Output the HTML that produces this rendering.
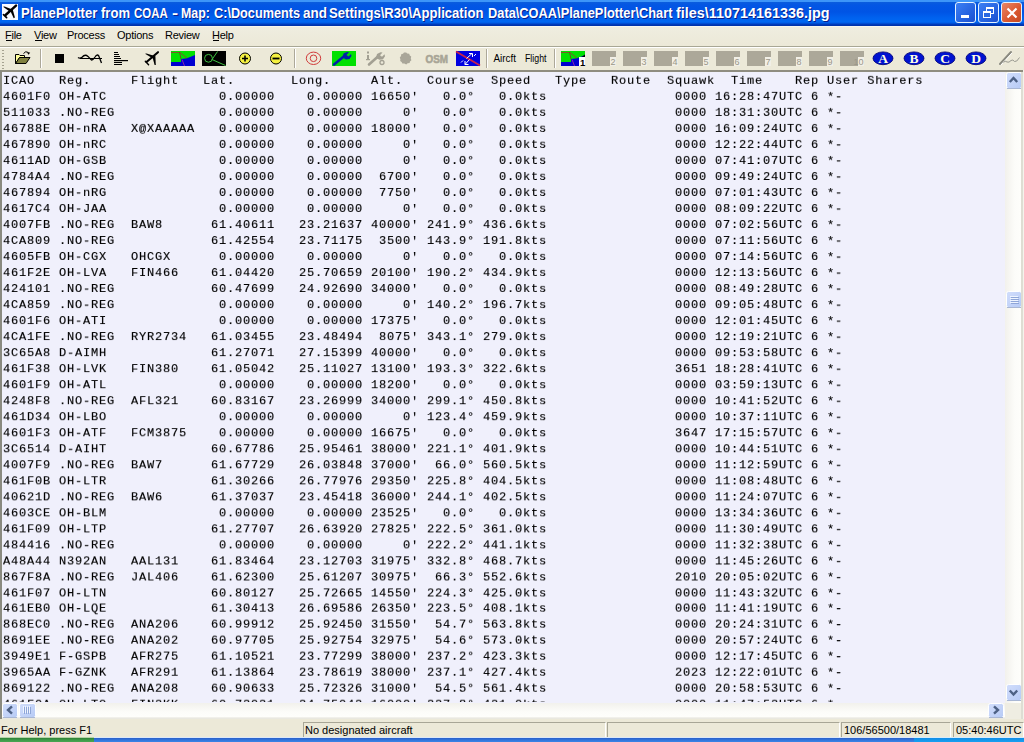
<!DOCTYPE html>
<html><head><meta charset="utf-8">
<style>
*{margin:0;padding:0;box-sizing:border-box}
html,body{width:1024px;height:742px;overflow:hidden;background:#ECE9D8;font-family:"Liberation Sans",sans-serif}
.abs{position:absolute}
#title{left:0;top:0;width:1024px;height:26px;
 background:linear-gradient(to bottom,#3D95F9 0px,#3D95F9 2px,#0B5DDD 2px,#0356E4 5px,#0054E5 12px,#0062EF 18px,#0067F2 22px,#0058E0 23px,#0042C6 24px,#0033AC 25px,#0033AC 26px)}
#ttext{left:0;top:5px;font:bold 14px "Liberation Sans",sans-serif;color:#fff;white-space:pre;text-shadow:1px 1px 0 #0A1E8C}
.tw{position:absolute;top:0;transform-origin:0 0}
.wbtn{top:2px;width:21px;height:21px;border:1px solid #E4F2FF;border-radius:3px}
#menu{left:0;top:26px;width:1024px;height:20px;background:linear-gradient(#F7F6EF 0,#F7F6EF 1px,#EFEDE0 1px,#ECE9D8 19px)}
.mi{top:29px;font-size:11px;letter-spacing:-0.25px;color:#000;white-space:pre}
#tb{left:0;top:46px;width:1024px;height:26px;background:#ECE9D8;border-top:1px solid #A8A795;box-shadow:inset 0 1px 0 #fff}
#list{left:0;top:70px;width:1024px;height:650px;background:#F0F0FC;border-top:2px solid #8F8D80;border-left:2px solid #8A8A80}
#ltext{left:1px;top:2px;font:12px "Liberation Mono",monospace;letter-spacing:0.8px;line-height:17.9775px;transform:scaleY(0.89);will-change:transform;-webkit-text-stroke:0.15px #000;transform-origin:0 0;white-space:pre;color:#000}
#vsb{left:1005px;top:72px;width:16px;height:631px;background:linear-gradient(to right,#F2F1EC,#FCFCF9 60%,#FEFEFB)}
#hsb{left:2px;top:703px;width:1003px;height:16px;background:linear-gradient(to bottom,#F2F1EC,#FCFCF9 55%,#FEFEFB 85%,#E9E8E0 94%)}
#grip{left:1005px;top:703px;width:16px;height:16px;background:#EFEDE2}
.sbb{width:15px;height:15px;border:1px solid #fff;border-radius:2px;background:linear-gradient(135deg,#C8D8FC,#B4C8F6)}
#status{left:0;top:719px;width:1024px;height:18px;background:#ECE9D8}
.st{font-size:11px;color:#000;white-space:pre}
.pane{top:722px;height:15px;border-left:1px solid #A8A696;border-top:1px solid #A8A696;border-right:1px solid #fff}
#task{left:0;top:737px;width:1024px;height:5px}
</style></head><body>
<div id="title" class="abs"></div>
<div class="abs" style="left:2px;top:4px;width:16px;height:16px;background:#F8FAFF">
<svg width="16" height="16" viewBox="0 0 16 16"><path d="M3.6 11L14 1.6" stroke="#000" stroke-width="2.4" stroke-linecap="round"/><path d="M1 2.8L2.6 2.6 10.4 5.4 8 7.8z" fill="#000"/><path d="M8.2 6.4L10.6 5 12.9 13.6 11.7 14.2z" fill="#000"/><path d="M1.5 10.6L4.6 13.6" stroke="#000" stroke-width="1.7" stroke-linecap="round"/></svg>
</div>
<div id="ttext" class="abs"><span class="tw" style="left:21.1px;transform:scaleX(0.9339)">PlanePlotter</span><span class="tw" style="left:101.2px;transform:scaleX(0.9317)">from</span><span class="tw" style="left:134.0px;transform:scaleX(0.8173)">COAA</span><span class="tw" style="left:171.7px;transform:scaleX(1.3057)">-</span><span class="tw" style="left:180.9px;transform:scaleX(0.8846)">Map:</span><span class="tw" style="left:213.7px;transform:scaleX(0.9062)">C:\Documents</span><span class="tw" style="left:302.8px;transform:scaleX(0.9642)">and</span><span class="tw" style="left:329.4px;transform:scaleX(0.9362)">Settings\R30\Application</span><span class="tw" style="left:487.9px;transform:scaleX(0.9155)">Data\COAA\PlanePlotter\Chart</span><span class="tw" style="left:676.2px;transform:scaleX(1.0277)">files\110714161336.jpg</span></div>
<div class="abs wbtn" style="left:955px;background:linear-gradient(135deg,#3C80F4,#2663E0 60%,#1B4FCF)"><div class="abs" style="left:5px;top:12px;width:8px;height:3px;background:#fff"></div></div>
<div class="abs wbtn" style="left:978px;background:linear-gradient(135deg,#3C80F4,#2663E0 60%,#1B4FCF)">
 <div class="abs" style="left:7px;top:4px;width:8px;height:7px;border:1px solid #fff;border-top-width:2px"></div>
 <div class="abs" style="left:4px;top:8px;width:8px;height:7px;border:1px solid #fff;border-top-width:2px;background:#2A68E2"></div>
</div>
<div class="abs wbtn" style="left:1001px;background:linear-gradient(135deg,#E98767,#D9572E 60%,#C44A22)">
<svg class="abs" style="left:4px;top:4px" width="12" height="12" viewBox="0 0 12 12"><path d="M1.5 1.5L10.5 10.5M10.5 1.5L1.5 10.5" stroke="#fff" stroke-width="2.2"/></svg>
</div>

<div id="menu" class="abs"></div>
<div class="abs mi" style="left:5px">File</div>
<div class="abs mi" style="left:34px">View</div>
<div class="abs mi" style="left:67px">Process</div>
<div class="abs mi" style="left:117px">Options</div>
<div class="abs mi" style="left:165px">Review</div>
<div class="abs mi" style="left:212px">Help</div>
<div class="abs" style="left:6px;top:40px;width:6px;height:1px;background:#000"></div>
<div class="abs" style="left:35px;top:40px;width:7px;height:1px;background:#000"></div>
<div class="abs" style="left:213px;top:40px;width:6px;height:1px;background:#000"></div>

<div id="tb" class="abs"></div>
<svg class="abs" style="left:0;top:46px" width="1024" height="26" viewBox="0 46 1024 26">
<g fill="#A5A290">
<rect x="2" y="50" width="2" height="1"/><rect x="2" y="53" width="2" height="1"/><rect x="2" y="56" width="2" height="1"/><rect x="2" y="59" width="2" height="1"/><rect x="2" y="62" width="2" height="1"/><rect x="2" y="65" width="2" height="1"/><rect x="2" y="68" width="2" height="1"/>
</g>
<!-- separators -->
<g fill="#ACA899"><rect x="40" y="49" width="1" height="19"/><rect x="294" y="49" width="1" height="19"/><rect x="486" y="49" width="1" height="19"/><rect x="554" y="49" width="1" height="19"/></g>
<g fill="#FFFFFF"><rect x="41" y="49" width="1" height="19"/><rect x="295" y="49" width="1" height="19"/><rect x="487" y="49" width="1" height="19"/><rect x="555" y="49" width="1" height="19"/></g>
<!-- open folder -->
<path d="M15.5 54.5H19L20 55.5H24.5V57.5H19.5L16 63.5H15.5Z" fill="#FFFF9C" stroke="#000" stroke-width="1"/>
<path d="M15.5 63.5L19.5 57.5H30L26 63.5Z" fill="#808040" stroke="#000" stroke-width="1"/>
<path d="M23.5 53.5Q25.5 50.5 28.5 52.5" fill="none" stroke="#000" stroke-width="1"/><path d="M27 52.5h3.2l-1.6 2.3z" fill="#000"/>
<!-- black square -->
<rect x="55" y="54" width="9" height="9" fill="#000"/>
<!-- wave -->
<path d="M78 57.5Q80 59 82 57.2Q85 53.8 88 56.4Q90 58.6 91.5 60Q93 60.2 95 57Q97 53.6 98.8 56L101.5 63" fill="none" stroke="#000" stroke-width="1.3"/>
<path d="M80 58.5H102" stroke="#000" stroke-width="1"/>
<!-- bars -->
<g fill="#000"><rect x="114" y="52" width="4" height="1"/><rect x="114" y="54" width="5" height="1"/><rect x="114" y="56" width="6" height="1"/><rect x="114" y="58" width="7" height="1"/><rect x="114" y="60" width="14" height="1.2"/><rect x="114" y="62" width="8" height="1"/><rect x="114" y="64" width="8" height="1"/></g>
<!-- airplane -->
<path d="M146.5 62L158 52.2" stroke="#000" stroke-width="2.1" stroke-linecap="round"/>
<path d="M145 53.8L146.6 53.6 155.5 56.3 153 58.6z" fill="#000"/>
<path d="M152.6 57.6L155.4 56.2 155.8 65 154.6 65z" fill="#000"/>
<path d="M145.3 61.3L148.6 64.8" stroke="#000" stroke-width="1.4" stroke-linecap="round"/>
<!-- map -->
<g transform="translate(0,0)">
<rect x="171" y="51" width="24" height="15" fill="#00E000"/>
<path d="M171 62H181V59L187 58.3 195 55V66H171z" fill="#0000D0"/>
<path d="M171 52.5H180L187 58" fill="none" stroke="#7A5A28" stroke-width="1"/>
<path d="M179.5 52L181 59" fill="none" stroke="#6A4A20" stroke-width="0.9"/>
<path d="M182 59.5L184.5 66" fill="none" stroke="#9A30A0" stroke-width="0.9"/>
</g>
<!-- scope -->
<rect x="202" y="51" width="24" height="15" fill="#000"/>
<circle cx="208.5" cy="58.3" r="3.9" fill="none" stroke="#40C040" stroke-width="1"/>
<path d="M217.5 51.5L212 59.5 225.5 65.5" fill="none" stroke="#40C040" stroke-width="1"/>
<!-- plus / minus -->
<circle cx="245" cy="58.5" r="5.5" fill="#F4F040" stroke="#000" stroke-width="1"/>
<path d="M242 58.5h6M245 55.5v6" stroke="#000" stroke-width="1.6"/>
<circle cx="276" cy="58.5" r="5.5" fill="#F4F040" stroke="#000" stroke-width="1"/>
<path d="M272.5 58.5h7" stroke="#000" stroke-width="1.8"/>
<!-- red rings -->
<ellipse cx="313.5" cy="58.3" rx="7.2" ry="6.2" fill="none" stroke="#D03A3A" stroke-width="1"/>
<circle cx="313.5" cy="58.3" r="3.3" fill="none" stroke="#D03A3A" stroke-width="1"/>
<!-- green wrench -->
<rect x="332" y="51" width="24" height="15" fill="#00E000"/>
<path d="M334 64.5L345 55.5" stroke="#0020A8" stroke-width="2.6" stroke-linecap="round"/>
<path d="M342.5 57.5L343.5 53.5 347 52 349 52.3 346.5 55 348.5 56.5 351 54 351.5 56 349.5 59 346 59.5z" fill="#0020A8"/>
<!-- gray i-wrench -->
<g fill="#A3A093"><rect x="367" y="51.5" width="2" height="2"/><rect x="367" y="55" width="2" height="5"/><rect x="366" y="59" width="4" height="1.2"/></g>
<path d="M369 64.5L378 56.5" stroke="#A3A093" stroke-width="2.6" stroke-linecap="round"/>
<path d="M376 58L377 54 380.5 52.2 382.5 52.5 380 55.2 382 56.8 384.5 54.3 385 56.3 383 59.3 379.5 59.8z" fill="#A3A093"/>
<circle cx="382" cy="62.5" r="2" fill="none" stroke="#A3A093" stroke-width="1.3"/>
<!-- gray blob -->
<path d="M404 52.6L406.2 52.4 407.2 53.6 409.2 53.8 409.8 55.4 411.2 56.6 410.8 58.4 411.4 60.2 410 61.4 409.6 63 407.6 63.2 406.2 64.4 404.4 63.6 402.4 63.6 401.6 62 400.2 61 400.4 59.2 399.8 57.4 401 56 401.2 54.2 403 53.8z" fill="#A9A699"/>
<!-- OSM -->
<text x="425.5" y="62.6" font-family="Liberation Sans" font-weight="bold" font-size="11.5" fill="#A8A596" stroke="#A8A596" stroke-width="0.6" textLength="22.5" lengthAdjust="spacingAndGlyphs">OSM</text>
<!-- blue arrows -->
<rect x="456" y="51" width="24" height="15" fill="#0000E0"/>
<path d="M456 51.5L480 65.5" stroke="#C8204A" stroke-width="1.8"/>
<path d="M466.5 58.5L472 53.5M469.5 59.5L465 64.5M463 60.5L461 62.5M474 56L476 54" stroke="#fff" stroke-width="1"/>
<path d="M469 53.5h3.5v3.5M465 61v3.5h3.5" fill="none" stroke="#fff" stroke-width="1"/>
<!-- text buttons -->
<text x="493.5" y="62" font-family="Liberation Sans" font-size="10.5" fill="#000" textLength="22.5" lengthAdjust="spacingAndGlyphs">Aircft</text>
<text x="525" y="62.3" font-family="Liberation Sans" font-size="11" fill="#000" textLength="21.5" lengthAdjust="spacingAndGlyphs">Flight</text>
<!-- map 1 -->
<g transform="translate(390,0)">
<rect x="171" y="51" width="24" height="15" fill="#00E000"/>
<path d="M171 62H181V59L187 58.3 195 55V66H171z" fill="#0000D0"/>
<path d="M171 52.5H180L187 58" fill="none" stroke="#7A5A28" stroke-width="1"/>
<path d="M179.5 52L181 59" fill="none" stroke="#6A4A20" stroke-width="0.9"/>
<path d="M182 59.5L184.5 66" fill="none" stroke="#9A30A0" stroke-width="0.9"/>
</g>
<path d="M581 57.5L585 54.5V57.5z" fill="#000"/>
<rect x="579" y="57" width="6" height="9" fill="#fff"/>
<text x="580" y="65.5" font-family="Liberation Sans" font-weight="bold" font-size="9.5" fill="#000">1</text>
<rect x="592" y="51" width="24" height="15" fill="#ACA899"/><rect x="610" y="57" width="6" height="9" fill="#F1EFE6"/><text x="615.5" y="65" text-anchor="end" font-family="Liberation Sans" font-size="9" fill="#9A978A">2</text><rect x="623" y="51" width="24" height="15" fill="#ACA899"/><rect x="641" y="57" width="6" height="9" fill="#F1EFE6"/><text x="646.5" y="65" text-anchor="end" font-family="Liberation Sans" font-size="9" fill="#9A978A">3</text><rect x="654" y="51" width="24" height="15" fill="#ACA899"/><rect x="672" y="57" width="6" height="9" fill="#F1EFE6"/><text x="677.5" y="65" text-anchor="end" font-family="Liberation Sans" font-size="9" fill="#9A978A">4</text><rect x="685" y="51" width="24" height="15" fill="#ACA899"/><rect x="703" y="57" width="6" height="9" fill="#F1EFE6"/><text x="708.5" y="65" text-anchor="end" font-family="Liberation Sans" font-size="9" fill="#9A978A">5</text><rect x="716" y="51" width="24" height="15" fill="#ACA899"/><rect x="734" y="57" width="6" height="9" fill="#F1EFE6"/><text x="739.5" y="65" text-anchor="end" font-family="Liberation Sans" font-size="9" fill="#9A978A">6</text><rect x="747" y="51" width="24" height="15" fill="#ACA899"/><rect x="765" y="57" width="6" height="9" fill="#F1EFE6"/><text x="770.5" y="65" text-anchor="end" font-family="Liberation Sans" font-size="9" fill="#9A978A">7</text><rect x="778" y="51" width="24" height="15" fill="#ACA899"/><rect x="796" y="57" width="6" height="9" fill="#F1EFE6"/><text x="801.5" y="65" text-anchor="end" font-family="Liberation Sans" font-size="9" fill="#9A978A">8</text><rect x="809" y="51" width="24" height="15" fill="#ACA899"/><rect x="827" y="57" width="6" height="9" fill="#F1EFE6"/><text x="832.5" y="65" text-anchor="end" font-family="Liberation Sans" font-size="9" fill="#9A978A">9</text><rect x="840" y="51" width="24" height="15" fill="#ACA899"/><rect x="858" y="57" width="6" height="9" fill="#F1EFE6"/><text x="863.5" y="65" text-anchor="end" font-family="Liberation Sans" font-size="9" fill="#9A978A">10</text><ellipse cx="883" cy="58.3" rx="10" ry="6.4" fill="#0012D0" stroke="#000070" stroke-width="0.8"/><text x="883" y="63" text-anchor="middle" font-family="Liberation Serif" font-weight="bold" font-size="13.5" fill="#FFFFE0">A</text><ellipse cx="914" cy="58.3" rx="10" ry="6.4" fill="#0012D0" stroke="#000070" stroke-width="0.8"/><text x="914" y="63" text-anchor="middle" font-family="Liberation Serif" font-weight="bold" font-size="13.5" fill="#FFFFE0">B</text><ellipse cx="945" cy="58.3" rx="10" ry="6.4" fill="#0012D0" stroke="#000070" stroke-width="0.8"/><text x="945" y="63" text-anchor="middle" font-family="Liberation Serif" font-weight="bold" font-size="13.5" fill="#FFFFE0">C</text><ellipse cx="976" cy="58.3" rx="10" ry="6.4" fill="#0012D0" stroke="#000070" stroke-width="0.8"/><text x="976" y="63" text-anchor="middle" font-family="Liberation Serif" font-weight="bold" font-size="13.5" fill="#FFFFE0">D</text>
<!-- pen -->
<path d="M1000 64L1011 52" stroke="#8A8A80" stroke-width="2" stroke-linecap="round"/>
<path d="M1001 65L1012 53" stroke="#FFFFFF" stroke-width="1"/>
<path d="M1003.5 62.5Q1005 60 1007 62 1009 63 1011 60.5 1013 59 1014.5 61.5 1016.5 62.5 1019.5 57.5" fill="none" stroke="#999990" stroke-width="1"/>
</svg>


<div id="list" class="abs"></div>
<div class="abs" style="left:2px;top:72px;width:1003px;height:630px;overflow:hidden"><div id="ltext" class="abs">ICAO   Reg.     Flight   Lat.       Long.     Alt.   Course  Speed   Type   Route  Squawk  Time    Rep User Sharers
4601F0 OH-ATC              0.00000    0.00000 16650&#x27;   0.0°   0.0kts                0000 16:28:47UTC 6 *-
511033 .NO-REG             0.00000    0.00000     0&#x27;   0.0°   0.0kts                0000 18:31:30UTC 6 *-
46788E OH-nRA   X@XAAAAA   0.00000    0.00000 18000&#x27;   0.0°   0.0kts                0000 16:09:24UTC 6 *-
467890 OH-nRC              0.00000    0.00000     0&#x27;   0.0°   0.0kts                0000 12:22:44UTC 6 *-
4611AD OH-GSB              0.00000    0.00000     0&#x27;   0.0°   0.0kts                0000 07:41:07UTC 6 *-
4784A4 .NO-REG             0.00000    0.00000  6700&#x27;   0.0°   0.0kts                0000 09:49:24UTC 6 *-
467894 OH-nRG              0.00000    0.00000  7750&#x27;   0.0°   0.0kts                0000 07:01:43UTC 6 *-
4617C4 OH-JAA              0.00000    0.00000     0&#x27;   0.0°   0.0kts                0000 08:09:22UTC 6 *-
4007FB .NO-REG  BAW8      61.40611   23.21637 40000&#x27; 241.9° 436.6kts                0000 07:02:56UTC 6 *-
4CA809 .NO-REG            61.42554   23.71175  3500&#x27; 143.9° 191.8kts                0000 07:11:56UTC 6 *-
4605FB OH-CGX   OHCGX      0.00000    0.00000     0&#x27;   0.0°   0.0kts                0000 07:14:56UTC 6 *-
461F2E OH-LVA   FIN466    61.04420   25.70659 20100&#x27; 190.2° 434.9kts                0000 12:13:56UTC 6 *-
424101 .NO-REG            60.47699   24.92690 34000&#x27;   0.0°   0.0kts                0000 08:49:28UTC 6 *-
4CA859 .NO-REG             0.00000    0.00000     0&#x27; 140.2° 196.7kts                0000 09:05:48UTC 6 *-
4601F6 OH-ATI              0.00000    0.00000 17375&#x27;   0.0°   0.0kts                0000 12:01:45UTC 6 *-
4CA1FE .NO-REG  RYR2734   61.03455   23.48494  8075&#x27; 343.1° 279.0kts                0000 12:19:21UTC 6 *-
3C65A8 D-AIMH             61.27071   27.15399 40000&#x27;   0.0°   0.0kts                0000 09:53:58UTC 6 *-
461F38 OH-LVK   FIN380    61.05042   25.11027 13100&#x27; 193.3° 322.6kts                3651 18:28:41UTC 6 *-
4601F9 OH-ATL              0.00000    0.00000 18200&#x27;   0.0°   0.0kts                0000 03:59:13UTC 6 *-
4248F8 .NO-REG  AFL321    60.83167   23.26999 34000&#x27; 299.1° 450.8kts                0000 10:41:52UTC 6 *-
461D34 OH-LBO              0.00000    0.00000     0&#x27; 123.4° 459.9kts                0000 10:37:11UTC 6 *-
4601F3 OH-ATF   FCM3875    0.00000    0.00000 16675&#x27;   0.0°   0.0kts                3647 17:15:57UTC 6 *-
3C6514 D-AIHT             60.67786   25.95461 38000&#x27; 221.1° 401.9kts                0000 10:44:51UTC 6 *-
4007F9 .NO-REG  BAW7      61.67729   26.03848 37000&#x27;  66.0° 560.5kts                0000 11:12:59UTC 6 *-
461F0B OH-LTR             61.30266   26.77976 29350&#x27; 225.8° 404.5kts                0000 11:08:48UTC 6 *-
40621D .NO-REG  BAW6      61.37037   23.45418 36000&#x27; 244.1° 402.5kts                0000 11:24:07UTC 6 *-
4603CE OH-BLM              0.00000    0.00000 23525&#x27;   0.0°   0.0kts                0000 13:34:36UTC 6 *-
461F09 OH-LTP             61.27707   26.63920 27825&#x27; 222.5° 361.0kts                0000 11:30:49UTC 6 *-
484416 .NO-REG             0.00000    0.00000     0&#x27; 222.2° 441.1kts                0000 11:32:38UTC 6 *-
A48A44 N392AN   AAL131    61.83464   23.12703 31975&#x27; 332.8° 468.7kts                0000 11:45:26UTC 6 *-
867F8A .NO-REG  JAL406    61.62300   25.61207 30975&#x27;  66.3° 552.6kts                2010 20:05:02UTC 6 *-
461F07 OH-LTN             60.80127   25.72665 14550&#x27; 224.3° 425.0kts                0000 11:43:32UTC 6 *-
461EB0 OH-LQE             61.30413   26.69586 26350&#x27; 223.5° 408.1kts                0000 11:41:19UTC 6 *-
868EC0 .NO-REG  ANA206    60.99912   25.92450 31550&#x27;  54.7° 563.8kts                0000 20:24:31UTC 6 *-
8691EE .NO-REG  ANA202    60.97705   25.92754 32975&#x27;  54.6° 573.0kts                0000 20:57:24UTC 6 *-
3949E1 F-GSPB   AFR275    61.10521   23.77299 38000&#x27; 237.2° 423.3kts                0000 12:17:45UTC 6 *-
3965AA F-GZNK   AFR291    61.13864   23.78619 38000&#x27; 237.1° 427.4kts                2023 12:22:01UTC 6 *-
869122 .NO-REG  ANA208    60.90633   25.72326 31000&#x27;  54.5° 561.4kts                0000 20:58:53UTC 6 *-
461F0A OH-LTO   FIN3KK    60.73931   24.75042 16000&#x27; 227.8° 421.0kts                0000 11:47:53UTC 6 *-</div></div>
<div id="vsb" class="abs"></div>
<div id="hsb" class="abs"></div>
<div id="grip" class="abs"></div>
<svg class="abs" style="left:0;top:0" width="1024" height="742" viewBox="0 0 1024 742">
<defs>
<linearGradient id="bg" x1="0" y1="0" x2="1" y2="1"><stop offset="0" stop-color="#D2DEFC"/><stop offset="1" stop-color="#B6CAF5"/></linearGradient>
</defs>
<g id="btns">
 <rect x="1006.5" y="72.5" width="15" height="16" rx="2" fill="url(#bg)" stroke="#FFFFFF" stroke-width="1"/>
 <path d="M1007 88.5H1021" stroke="#A9B7D4" stroke-width="1"/>
 <path d="M1009.8 82L1013.5 78 1017.2 82" fill="none" stroke="#4D6185" stroke-width="2.4"/>
 <rect x="1006.5" y="684.5" width="15" height="16" rx="2" fill="url(#bg)" stroke="#FFFFFF" stroke-width="1"/>
 <path d="M1007 700.5H1021" stroke="#A9B7D4" stroke-width="1"/>
 <path d="M1009.8 690.5L1013.5 694.5 1017.2 690.5" fill="none" stroke="#4D6185" stroke-width="2.4"/>
 <rect x="1006.5" y="291.5" width="15" height="16" rx="2" fill="url(#bg)" stroke="#FFFFFF" stroke-width="1"/>
 <path d="M1007 307.5H1021" stroke="#A9B7D4" stroke-width="1"/>
 <g stroke="#EEF4FF" stroke-width="1"><path d="M1010 296.5h8M1010 298.5h8M1010 300.5h8M1010 302.5h8"/></g>
 <g stroke="#8FA6D8" stroke-width="1"><path d="M1011 297.5h8M1011 299.5h8M1011 301.5h8M1011 303.5h8"/></g>
 <rect x="2.5" y="703.5" width="15" height="14" rx="2" fill="url(#bg)" stroke="#FFFFFF" stroke-width="1"/>
 <path d="M3 717.5H17" stroke="#A9B7D4" stroke-width="1"/>
 <path d="M12 706.3L8 710 12 713.7" fill="none" stroke="#4D6185" stroke-width="2.4"/>
 <rect x="19.5" y="703.5" width="16" height="14" rx="2" fill="url(#bg)" stroke="#FFFFFF" stroke-width="1"/>
 <path d="M20 717.5H35" stroke="#A9B7D4" stroke-width="1"/>
 <g stroke="#EEF4FF" stroke-width="1"><path d="M23.5 706v7M25.5 706v7M27.5 706v7M29.5 706v7"/></g>
 <g stroke="#8FA6D8" stroke-width="1"><path d="M24.5 707v7M26.5 707v7M28.5 707v7M30.5 707v7"/></g>
 <rect x="988.5" y="703.5" width="15" height="14" rx="2" fill="url(#bg)" stroke="#FFFFFF" stroke-width="1"/>
 <path d="M989 717.5H1003" stroke="#A9B7D4" stroke-width="1"/>
 <path d="M994 706.3L998 710 994 713.7" fill="none" stroke="#4D6185" stroke-width="2.4"/>
</g>
<rect x="1021" y="72" width="2" height="647" fill="#DEDDD3"/><rect x="1023" y="70" width="1" height="649" fill="#F4F3EC"/>
</svg>

<div id="status" class="abs"></div>
<div class="abs st" style="left:1px;top:724px">For Help, press F1</div>
<div class="abs pane" style="left:303px;width:303px"></div>
<div class="abs pane" style="left:607px;width:233px"></div>
<div class="abs pane" style="left:841px;width:110px"></div>
<div class="abs pane" style="left:953px;width:71px"></div>
<div class="abs st" style="left:305px;top:724px">No designated aircraft</div>
<div class="abs st" style="left:844px;top:724px">106/56500/18481</div>
<div class="abs st" style="left:956px;top:724px">05:40:46UTC</div>
<div class="abs" style="left:0;top:737px;width:94px;height:5px;background:linear-gradient(#B5D3A8 0,#B5D3A8 1px,#2F7F36 1px,#3E9B48 3px,#4AA653 5px)"></div>
<div class="abs" style="left:94px;top:737px;width:820px;height:5px;background:linear-gradient(#DCE8F8 0,#DCE8F8 1px,#2A5FC8 1px,#3274DC 3px,#3A86E6 5px)"></div>
<div class="abs" style="left:914px;top:737px;width:110px;height:5px;background:linear-gradient(#D8ECFA 0,#D8ECFA 1px,#118DE6 1px,#18A0F0 5px)"></div>
</body></html>
